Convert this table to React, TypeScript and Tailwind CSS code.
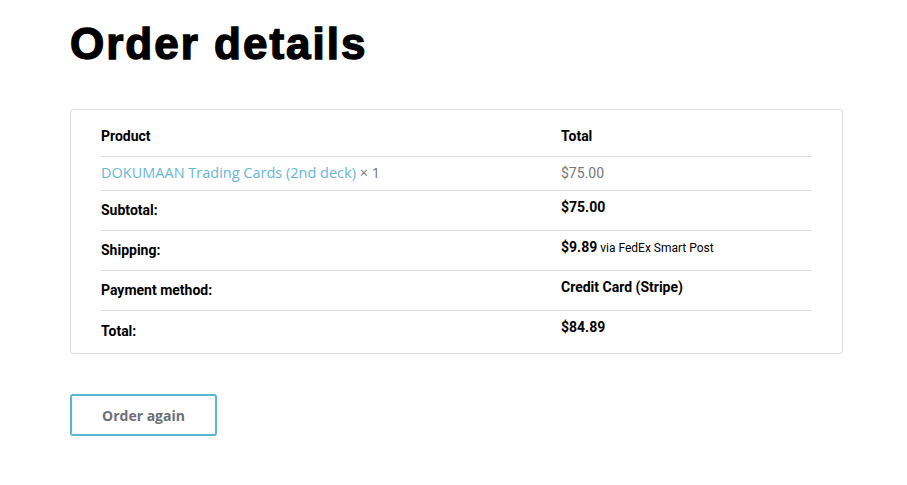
import React from "react";

const rows = [
  { label: "Subtotal:", value: <span className="font-bold">$75.00</span> },
  {
    label: "Shipping:",
    value: (
      <>
        <span className="font-bold">$9.89</span>
        <span className="text-[12px] leading-none font-normal"> via FedEx Smart Post</span>
      </>
    ),
  },
  { label: "Payment method:", value: <span className="font-bold">Credit Card (Stripe)</span> },
  { label: "Total:", value: <span className="font-bold">$84.89</span> },
];

export default function App() {
  return (
    <div className="min-h-screen bg-white pl-[70px] pr-[64px] pt-[22px] font-['Roboto',sans-serif] text-black">
      <h1 className="font-['Liberation_Sans',Arial,sans-serif] text-[44px] font-black leading-none tracking-[2px] [-webkit-text-stroke:1.4px_#000]">
        Order details
      </h1>

      <div className="mt-[43px] w-[773px] rounded-[3px] border border-[#dddddd] px-[30px]">
        <table className="w-full border-collapse text-left text-[14px] leading-5">
          <thead>
            <tr className="border-b border-[#dddddd]">
              <th className="w-[460px] pt-[16px] pb-[10px] font-bold">Product</th>
              <th className="pt-[16px] pb-[10px] font-bold">Total</th>
            </tr>
          </thead>
          <tbody>
            <tr className="border-b border-[#dddddd]">
              <td className="h-[34px] pt-[6px] pb-[7px]">
                <a className="font-['Open_Sans',sans-serif] text-[14.5px] text-[#6ab6d8]">
                  DOKUMAAN Trading Cards (2nd deck)
                </a>
                <span className="font-['Open_Sans',sans-serif] text-[14.5px] text-[#777777]"> × 1</span>
              </td>
              <td className="pt-[6px] pb-[7px] text-[#777777]">$75.00</td>
            </tr>
          </tbody>
          <tfoot>
            {rows.map((r, i) => (
              <tr key={r.label} className={i < rows.length - 1 ? "border-b border-[#dddddd]" : ""}>
                <th className={`align-top font-bold ${i === rows.length - 1 ? "h-[42px] pt-[10px] pb-[12px]" : "h-[40px] pt-[9px] pb-[10px]"}`}>
                  {r.label}
                </th>
                <td className={`align-top ${i === rows.length - 1 ? "pt-[6px] pb-[16px]" : "pt-[6px] pb-[13px]"}`}>
                  {r.value}
                </td>
              </tr>
            ))}
          </tfoot>
        </table>
      </div>

      <button className="mt-[40px] h-[42px] w-[147px] rounded-[3px] border-2 border-[#5bb5d6] bg-white font-['Open_Sans',sans-serif] text-[14px] font-bold text-[#6b6f76]">
        Order again
      </button>
    </div>
  );
}
